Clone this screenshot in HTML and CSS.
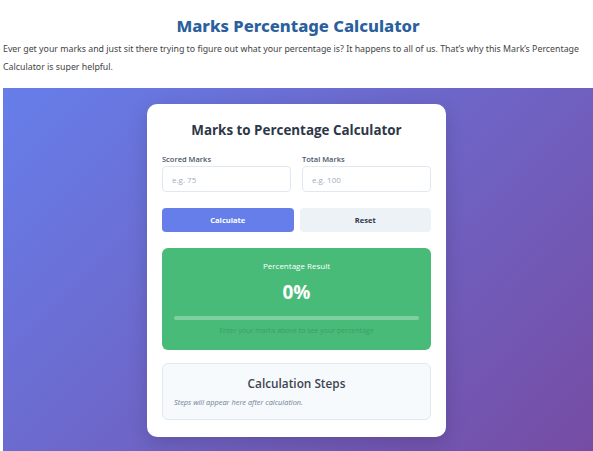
FILE: index.html
```html
<!DOCTYPE html>
<html>
<head>
  <meta charset="utf-8">
  <title>Marks Percentage Calculator</title>
  <link rel="stylesheet" href="styles.css">
</head>
<body>

  <h1 class="page-title">Marks Percentage Calculator</h1>
  <p class="intro">Ever get your marks and just sit there trying to figure out what your percentage is? It happens to all of us. That’s why this Mark’s Percentage Calculator is super helpful.</p>

  <div class="stage">
    <div class="card">
      <h2 class="card-title">Marks to Percentage Calculator</h2>

      <div class="fields">
        <div class="field">
          <label for="scored">Scored Marks</label>
          <input id="scored" type="number" placeholder="e.g. 75">
        </div>
        <div class="field">
          <label for="total">Total Marks</label>
          <input id="total" type="number" placeholder="e.g. 100">
        </div>
      </div>

      <div class="actions">
        <button class="btn btn-primary">Calculate</button>
        <button class="btn btn-plain">Reset</button>
      </div>

      <div class="result">
        <div class="result-label">Percentage Result</div>
        <div class="result-value">0%</div>
        <div class="bar"><div class="bar-fill"></div></div>
        <div class="result-note">Enter your marks above to see your percentage</div>
      </div>

      <div class="steps">
        <h3>Calculation Steps</h3>
        <p>Steps will appear here after calculation.</p>
      </div>
    </div>
  </div>

</body>
</html>
```

FILE: styles.css
```css
body {
  margin: 0;
  padding: 0 0 0 3px;
  font-family: "Noto Sans", "Open Sans", sans-serif;
  color: #333;
  background: #fff;
  overflow: hidden;
}

.page-title {
  margin: 14px 0 0;
  text-align: center;
  font-size: 16.6px;
  font-weight: 800;
  color: #2b5f9e;
  line-height: 24px;
}

.intro {
  margin: 2px 0 0;
  font-size: 8.8px;
  line-height: 18px;
  color: #444;
}

.stage {
  margin-top: 12px;
  padding: 16px 0 40px;
  background: linear-gradient(135deg, #667eea 0%, #764ba2 100%);
  display: flex;
  justify-content: center;
}

.card {
  width: 299px;
  box-sizing: border-box;
  margin-right: 3px;
  padding: 14px 15px 17px;
  background: #fff;
  border-radius: 10px;
  box-shadow: 0 6px 20px rgba(0, 0, 0, 0.15);
  font-family: "Open Sans", "Noto Sans", sans-serif;
}

.card-title {
  margin: 0 0 12px;
  text-align: center;
  font-size: 13.4px;
  font-weight: 700;
  color: #2d3748;
  line-height: 24px;
}

.fields {
  display: flex;
  gap: 11px;
}

.field {
  flex: 1;
  display: flex;
  flex-direction: column;
}

.field label {
  font-size: 7.5px;
  font-weight: 600;
  color: #4a5568;
  line-height: 10px;
  margin-bottom: 2px;
}

.field input {
  height: 26px;
  box-sizing: border-box;
  border: 1px solid #e2e8f0;
  border-radius: 4px;
  padding: 0 9px;
  font-family: inherit;
  font-size: 8px;
  outline: none;
}

.field input::placeholder {
  color: #a0aec0;
}

.actions {
  display: flex;
  gap: 6px;
  margin-top: 16px;
}

.btn {
  flex: 1;
  height: 24px;
  border: none;
  border-radius: 4px;
  font-family: inherit;
  font-size: 7.5px;
  font-weight: 700;
}

.btn-primary {
  background: #667eea;
  color: #fff;
}

.btn-plain {
  background: #edf2f7;
  color: #2d3748;
}

.result {
  margin-top: 16px;
  height: 102px;
  box-sizing: border-box;
  padding: 12px 12px 0;
  background: #48bb78;
  border-radius: 6px;
  text-align: center;
  color: #fff;
}

.result-label {
  font-size: 8px;
  line-height: 12px;
}

.result-value {
  margin-top: 9px;
  font-size: 19px;
  font-weight: 700;
  line-height: 22px;
}

.bar {
  margin-top: 13px;
  height: 4px;
  border-radius: 2px;
  background: rgba(255, 255, 255, 0.3);
}

.bar-fill {
  width: 0;
  height: 100%;
}

.result-note {
  margin-top: 6px;
  font-size: 7px;
  line-height: 10px;
  color: #3f9e66;
}

.steps {
  margin-top: 13px;
  height: 57px;
  box-sizing: border-box;
  padding: 10px 11px 0;
  background: #f7fafc;
  border: 1px solid #e2e8f0;
  border-radius: 6px;
}

.steps h3 {
  margin: 0;
  text-align: center;
  font-size: 11.8px;
  font-weight: 600;
  color: #3d4451;
  line-height: 18px;
}

.steps p {
  margin: 5px 0 0;
  font-size: 7.4px;
  font-style: italic;
  color: #718096;
}
```
